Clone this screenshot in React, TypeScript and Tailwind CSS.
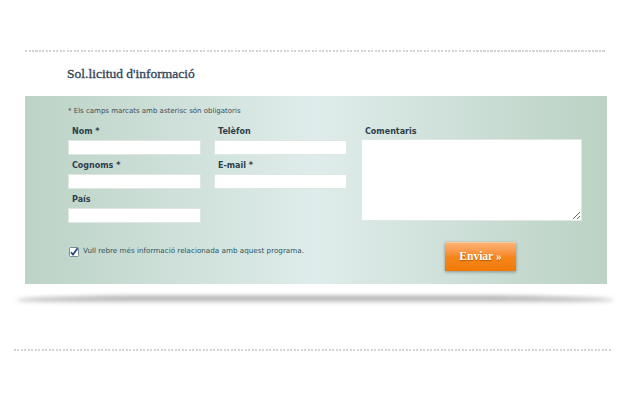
import React from "react";

const DOTS =
  "h-[2px] bg-[repeating-linear-gradient(90deg,#d4d4d4_0_2px,transparent_2px_3.5px)]";

function Field({ label, className = "" }: { label: string; className?: string }) {
  return (
    <div className={`flex flex-col ${className}`}>
      <label className="h-[12px] leading-[12px] pl-[4px] mb-[2px] text-[8px] font-bold text-[#2e404b]">
        {label}
      </label>
      <input
        type="text"
        className="w-[133px] h-[15px] bg-white border border-[#dfe7e3] outline-none"
      />
    </div>
  );
}

export default function App() {
  return (
    <div
      className="w-[630px] h-[400px] bg-white overflow-hidden pt-[50px]"
      style={{ fontFamily: '"DejaVu Sans", Verdana, sans-serif' }}
    >
      {/* top separator */}
      <div className={`ml-[25px] w-[580px] ${DOTS}`} />

      {/* title */}
      <div className="h-[44px] flex items-center pl-[67px]">
        <h2
          className="text-[13.5px] text-[#37465a] [-webkit-text-stroke:0.35px_#37465a]"
          style={{ fontFamily: '"Liberation Serif", "DejaVu Serif", serif' }}
        >
          Sol.licitud d'informació
        </h2>
      </div>

      {/* form card */}
      <div className="ml-[25px] w-[582px] h-[188px] bg-gradient-to-r from-[#bcd3c6] via-[#dfeceb] to-[#bbd2c4] pl-[43px] pt-[10px]">
        <p className="h-[10px] leading-[10px] text-[7px] text-[#3e4d56]">
          * Els camps marcats amb asterisc són obligatoris
        </p>

        <div className="flex mt-[10px]">
          <div className="grid grid-cols-[133px_133px] gap-x-[13px] gap-y-[5px]">
            <Field label="Nom *" />
            <Field label="Telèfon" />
            <Field label="Cognoms *" />
            <Field label="E-mail *" />
            <Field label="País" />
          </div>

          <div className="ml-[14px] flex flex-col">
            <label className="h-[12px] leading-[12px] pl-[4px] mb-[1px] text-[8px] font-bold text-[#2e404b]">
              Comentaris
            </label>
            <textarea className="w-[221px] h-[82px] bg-white border border-[#dfe7e3] outline-none resize" />
          </div>
        </div>

        <div className="flex items-start mt-[19px]">
          <label className="w-[377px] mt-[4px] h-[11px] flex items-center gap-[4px] pl-[1px] text-[7.2px] text-[#2d5561]">
            <svg width="10" height="10" viewBox="0 0 10 10" className="shrink-0">
              <rect x="0.5" y="0.5" width="9" height="9" rx="1" fill="#fff" stroke="#7f8a94" />
              <path d="M2 5.2 L4 7.6 L8.6 1.2" fill="none" stroke="#22448c" strokeWidth="1.7" />
            </svg>
            Vull rebre més informació relacionada amb aquest programa.
          </label>

          <button
            className="w-[71px] h-[29px] bg-gradient-to-b from-[#fbb274] via-[#f6861a] to-[#f07a06] border-t border-[#fcc99a] shadow-[0_1px_3px_rgba(0,0,0,0.35)] text-white text-[11.5px] font-bold [text-shadow:0_1px_1px_rgba(120,50,0,0.6)]"
            style={{ fontFamily: '"Liberation Serif", "DejaVu Serif", serif' }}
          >
            Enviar »
          </button>
        </div>
      </div>

      {/* shadow under card */}
      <div className="ml-[16px] w-[598px] h-[8px] mt-[12px] rounded-[50%/100%] bg-gradient-to-b from-[#8e8e8e] to-white blur-[2px]" />

      {/* bottom separator */}
      <div className={`ml-[14px] w-[598px] mt-[45px] ${DOTS}`} />
    </div>
  );
}
